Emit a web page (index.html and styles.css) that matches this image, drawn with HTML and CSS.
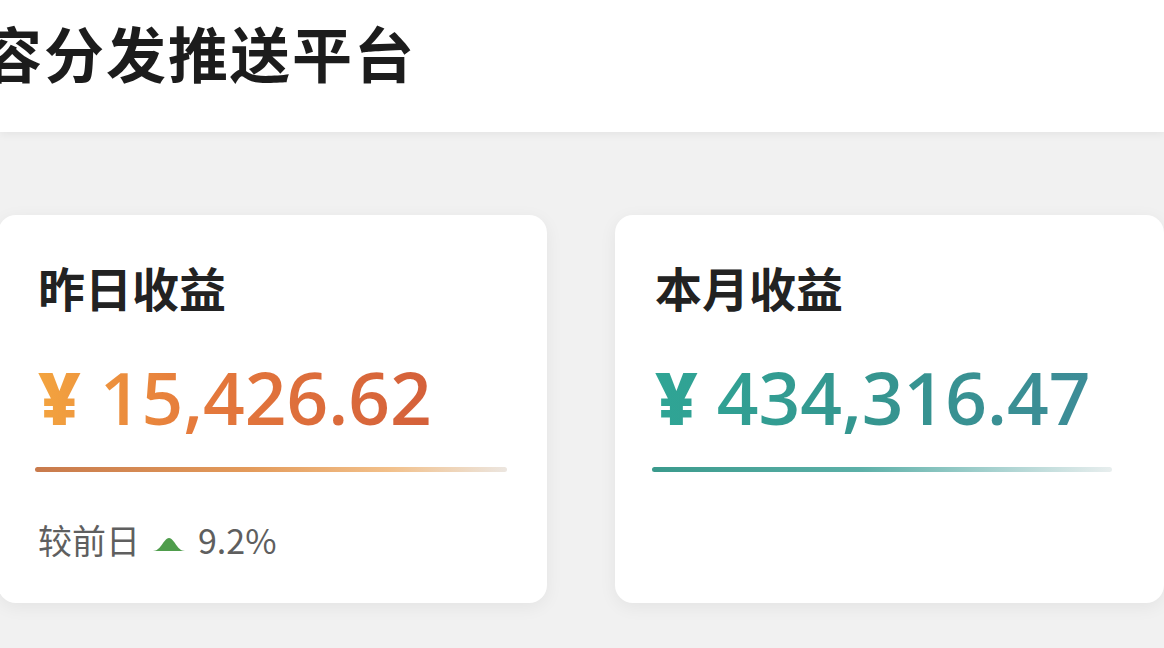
FILE: index.html
```html
<!DOCTYPE html>
<html lang="zh-CN">
<head>
<meta charset="utf-8">
<title>内容分发推送平台</title>
<link rel="stylesheet" href="styles.css">
</head>
<body>
<header class="header">
  <h1 class="title">内容分发推送平台</h1>
</header>
<main class="cards">
  <section class="card">
    <h2 class="card-title">昨日收益</h2>
    <div class="value value-orange"><span class="yen">¥</span> 15,426.62</div>
    <div class="bar bar-orange"></div>
    <div class="compare">较前日 <svg class="up" width="34" height="16" viewBox="0 0 34 16"><path d="M1 15 C9 15 11 3 17 2 C23 3 25 15 33 15 Z" fill="#4f9d4c"/></svg> 9.2%</div>
  </section>
  <section class="card">
    <h2 class="card-title">本月收益</h2>
    <div class="value value-teal"><span class="yen">¥</span> 434,316.47</div>
    <div class="bar bar-teal"></div>
  </section>
</main>
</body>
</html>
```
FILE: styles.css
```css
html, body {
  margin: 0;
  padding: 0;
}
body {
  background: #f1f1f1;
  font-family: "Open Sans", "Noto Sans CJK SC", sans-serif;
  width: 1164px;
  height: 648px;
  overflow: hidden;
}
.header {
  height: 132px;
  background: #ffffff;
  box-shadow: 0 3px 8px rgba(0, 0, 0, 0.05);
  display: flex;
  align-items: flex-start;
  overflow: hidden;
}
.title {
  margin: 20px 0 0 -80px;
  font-family: "Noto Sans CJK SC", sans-serif;
  font-size: 60px;
  line-height: 64px;
  font-weight: 700;
  color: #1c1c1c;
  white-space: nowrap;
  letter-spacing: 2px;
}
.cards {
  display: grid;
  grid-template-columns: 549px 549px;
  gap: 68px;
  margin-left: -2px;
  padding-top: 83px;
}
.card {
  background: #ffffff;
  border-radius: 18px;
  height: 388px;
  box-sizing: border-box;
  padding: 44px 40px 0 40px;
  box-shadow: 0 4px 18px rgba(0, 0, 0, 0.06);
}
.card-title {
  margin: 0;
  font-family: "Noto Sans CJK SC", sans-serif;
  font-size: 47px;
  line-height: 56px;
  font-weight: 700;
  color: #222222;
}
.value {
  margin-top: 40px;
  font-size: 73px;
  line-height: 84px;
  font-weight: 600;
  display: inline-block;
  -webkit-background-clip: text;
  background-clip: text;
  color: transparent;
}
.yen {
  font-weight: 800;
}
.value-orange {
  background-image: linear-gradient(90deg, #f3a43f 0%, #e57a3c 40%, #d4603a 100%);
}
.value-teal {
  background-image: linear-gradient(90deg, #2fa595 0%, #35958f 50%, #3d8c97 100%);
}
.bar {
  height: 5px;
  border-radius: 3px;
  margin-top: 28px;
  margin-left: -3px;
}
.bar-orange {
  background: linear-gradient(90deg, #c87a4c 0%, #e39a5a 45%, #f2c08a 75%, #ece6e0 100%);
}
.bar-teal {
  width: 460px;
  background: linear-gradient(90deg, #3a9a8c 0%, #5cb0a8 45%, #a8d2d0 75%, #e8eeee 100%);
}
.compare {
  margin-top: 48px;
  font-family: "Noto Sans CJK SC", sans-serif;
  font-size: 34px;
  line-height: 40px;
  color: #5f5f5f;
  display: flex;
  align-items: center;
  gap: 12px;
}
.compare .up {
  margin-top: 8px;
}
```
